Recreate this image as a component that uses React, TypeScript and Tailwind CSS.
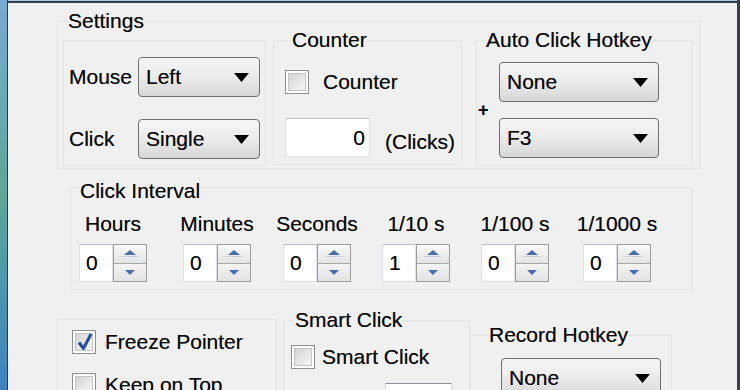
import React from 'react';

// Win7-style "Auto Clicker" options dialog, scaled up

function Combo({ value, className }: { value: string; className: string }) {
  return (
    <div
      className={`flex shrink-0 items-center justify-between rounded-[4px] border border-[#6f6f6f] bg-linear-to-b from-[#f6f6f6] via-[#ebebeb] to-[#d6d6d6] pl-[7px] pr-[10px] ${className}`}
    >
      <span>{value}</span>
      <svg width="15" height="9" viewBox="0 0 15 9">
        <path d="M0 0h15L7.5 9z" fill="#000" />
      </svg>
    </div>
  );
}

function Check({ checked }: { checked?: boolean }) {
  return (
    <div className="flex h-[24px] w-[24px] shrink-0 border border-[#8e8f8f] bg-white p-[2px]">
      <div className="relative flex-1 border border-[#c4c4c4] bg-linear-to-br from-[#d4d4d4] to-[#f7f7f7]">
        {checked && (
          <svg className="absolute -top-[2px] left-0" width="18" height="20" viewBox="0 0 18 20">
            <path d="M3 10.5 L7.5 16.5 L15 2" stroke="#2b4c9c" strokeWidth="3" fill="none" strokeLinejoin="round" />
          </svg>
        )}
      </div>
    </div>
  );
}

function Spin({ value }: { value: string }) {
  return (
    <div className="flex h-[38px] w-[68px]">
      <div className="flex w-[34px] items-center border border-[#dde1e6] border-t-[#b9bcc2] bg-white pl-[6px]">
        {value}
      </div>
      <div className="flex w-[34px] flex-col border border-[#9c9c9c]">
        <div className="flex flex-1 items-center justify-center border-b border-[#a8a8a8] bg-linear-to-b from-[#fafafa] to-[#e4e4e4]">
          <svg width="20" height="9" viewBox="0 0 20 9">
            <path d="M4 6h12L10 1z" fill="#4a6cab" />
            <path d="M1 7.5h18" stroke="#c9cfda" strokeWidth="1" />
          </svg>
        </div>
        <div className="flex flex-1 items-center justify-center bg-linear-to-b from-[#f4f4f4] to-[#e2e2e2]">
          <svg width="12" height="7" viewBox="0 0 12 7">
            <path d="M1 1h10L6 6z" fill="#4a6cab" />
          </svg>
        </div>
      </div>
    </div>
  );
}

function Title({ text, className }: { text: string; className: string }) {
  return <div className={`relative self-start bg-[#f0f0f0] leading-[24px] whitespace-nowrap ${className}`}>{text}</div>;
}

const interval = [
  { label: 'Hours', value: '0', ml: 'ml-[8px]' },
  { label: 'Minutes', value: '0', ml: 'ml-[36px]' },
  { label: 'Seconds', value: '0', ml: 'ml-[32px]' },
  { label: '1/10 s', value: '1', ml: 'ml-[31px]' },
  { label: '1/100 s', value: '0', ml: 'ml-[31px]' },
  { label: '1/1000 s', value: '0', ml: 'ml-[34px]' },
];

export default function App() {
  return (
    <div className="flex h-[390px] w-[740px] overflow-hidden bg-[#f0f0f0] font-['Liberation_Sans',Arial,sans-serif] text-[21px] leading-[24px] text-[#0a0a0a] [text-shadow:0_0_0.6px_rgba(0,0,0,0.6)]">
      {/* window frame, left */}
      <div className="w-[7px] shrink-0 bg-linear-to-b from-[#78aad0] via-[#5ea69a] to-[#3f82bf]" />
      <div className="w-px shrink-0 bg-[#2c3946]" />

      <div className="flex flex-1 flex-col border-r-[3px] border-[#34404c]">
        <div className="h-px shrink-0 bg-[#a9c3d8]" />
        <div className="h-[2px] shrink-0 bg-[#36414d]" />

        {/* Settings */}
        <div className="ml-[49px] mt-[18px] flex h-[148px] w-[643px] shrink-0 flex-col border border-[#e3e3e3]">
          <Title text="Settings" className="-mt-[13px] ml-[10px]" />
          <div className="flex items-start">
            <div className="ml-[5px] mt-[7px] flex h-[126px] w-[203px] flex-col border border-[#e3e3e3] px-[5px] pt-[16px]">
              <div className="flex h-[40px] items-center">
                <span className="w-[71px]">Mouse</span>
                <Combo value="Left" className="h-[40px] w-[122px]" />
              </div>
              <div className="mt-[22px] flex h-[40px] items-center">
                <span className="w-[71px]">Click</span>
                <Combo value="Single" className="h-[40px] w-[122px]" />
              </div>
            </div>

            <div className="ml-[7px] mt-[7px] flex h-[125px] w-[189px] flex-col border border-[#e3e3e3] pl-[11px]">
              <Title text="Counter" className="-mt-[13px] ml-[7px]" />
              <div className="mt-[18px] flex items-center">
                <Check />
                <span className="ml-[14px]">Counter</span>
              </div>
              <div className="mt-[24px] flex items-end">
                <div className="flex h-[39px] w-[85px] items-center justify-end border border-[#dde1e6] border-t-[#b9bcc2] bg-white pr-[4px]">
                  0
                </div>
                <span className="mb-[3px] ml-[15px]">(Clicks)</span>
              </div>
            </div>

            <div className="ml-[14px] mt-[7px] flex h-[126px] w-[216px] flex-col border border-[#e3e3e3]">
              <Title text="Auto Click Hotkey" className="-mt-[13px] ml-[9px]" />
              <Combo value="None" className="ml-[22px] mt-[10px] h-[40px] w-[160px]" />
              <div className="flex h-[16px] items-center pl-[1px] text-[18px] font-bold leading-[16px]">+</div>
              <Combo value="F3" className="ml-[22px] h-[40px] w-[160px]" />
            </div>
          </div>
        </div>

        {/* Click Interval */}
        <div className="ml-[62px] mt-[18px] flex h-[103px] w-[622px] shrink-0 flex-col border border-[#e3e3e3]">
          <Title text="Click Interval" className="-mt-[9px] ml-[9px]" />
          <div className="mt-[9px] flex">
            {interval.map((c) => (
              <div key={c.label} className={`flex w-[68px] flex-col items-center ${c.ml}`}>
                <span className="whitespace-nowrap">{c.label}</span>
                <div className="mt-[8px]">
                  <Spin value={c.value} />
                </div>
              </div>
            ))}
          </div>
        </div>

        {/* Bottom options */}
        <div className="flex items-start">
          <div className="ml-[49px] mt-[29px] flex h-[120px] w-[220px] flex-col border border-[#e3e3e3] pl-[14px] pt-[10px]">
            <div className="flex items-center">
              <Check checked />
              <span className="ml-[9px]">Freeze Pointer</span>
            </div>
            <div className="mt-[19px] flex items-center">
              <Check />
              <span className="ml-[9px]">Keep on Top</span>
            </div>
          </div>

          <div className="ml-[6px] mt-[30px] flex h-[120px] w-[187px] flex-col border border-[#e3e3e3] pl-[7px]">
            <Title text="Smart Click" className="-mt-[13px] ml-[4px]" />
            <div className="mt-[13px] flex items-center">
              <Check />
              <span className="ml-[7px]">Smart Click</span>
            </div>
            <div className="ml-[94px] mt-[14px] h-[40px] w-[67px] border border-[#dde1e6] border-t-[#8f9298] bg-white" />
          </div>

          <div className="mt-[45px] flex h-[120px] w-[202px] flex-col border border-[#e3e3e3]">
            <Title text="Record Hotkey" className="-mt-[13px] ml-[18px]" />
            <Combo value="None" className="ml-[30px] mt-[11px] h-[40px] w-[160px]" />
          </div>
        </div>
      </div>
    </div>
  );
}
